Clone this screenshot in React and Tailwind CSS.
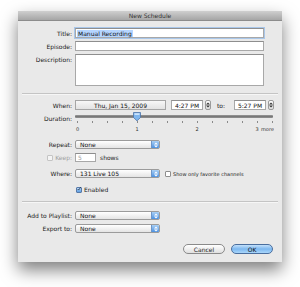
import React from "react";

const Label = ({ children, className = "" }) => (
  <div className={`w-[57px] shrink-0 pr-[3px] text-right text-[6px] leading-[7px] text-[#1a1a1a] ${className}`}>
    {children}
  </div>
);

const Field = ({ className = "", children }) => (
  <div className={`flex items-center border border-[#a8a8a8] border-t-[#8e8e8e] bg-white text-[6px] leading-[7px] text-[#111] ${className}`}>
    {children}
  </div>
);

const UpDown = ({ color = "#fff" }) => (
  <svg width="4" height="6" viewBox="0 0 4 6">
    <path d="M0 2.4 L2 0.4 L4 2.4 Z" fill={color} />
    <path d="M0 3.6 L2 5.6 L4 3.6 Z" fill={color} />
  </svg>
);

const Popup = ({ value }) => (
  <div className="flex h-[9px] w-[85px] overflow-hidden rounded-[2px] border border-[#9b9b9b] bg-linear-to-b from-white to-[#e4e4e4]">
    <div className="flex-1 pl-[4px] text-[6px] leading-[7px] text-[#111]">{value}</div>
    <div className="flex w-[8px] items-center justify-center border-l border-[#6d95c7] bg-linear-to-b from-[#a9d0f5] to-[#4a90e0]">
      <UpDown />
    </div>
  </div>
);

const Stepper = () => (
  <div className="flex h-[10px] w-[6px] items-center justify-center rounded-[2px] border border-[#9b9b9b] bg-linear-to-b from-white to-[#dcdcdc]">
    <UpDown color="#333" />
  </div>
);

const Check = ({ checked, dim }) => (
  <div
    className={`flex h-[6px] w-[6px] shrink-0 items-center justify-center rounded-[1px] border ${
      dim ? "border-[#c4c4c4] bg-[#f4f4f4]" : "border-[#8e8e8e] bg-white"
    } ${checked ? "bg-linear-to-b from-[#b8d9f7] to-[#5d9fe3] border-[#5879a8]" : ""}`}
  >
    {checked && (
      <svg width="6" height="6" viewBox="0 0 6 6" className="-mt-[1px]">
        <path d="M1 3 L2.5 4.6 L5.6 0.3" stroke="#1b2a44" strokeWidth="1.1" fill="none" />
      </svg>
    )}
  </div>
);

const Slider = () => {
  const ticks = Array.from({ length: 14 }, (_, i) => 2 + i * 15);
  return (
    <svg width="199" height="20" viewBox="0 0 199 20" className="block">
      <rect x="0" y="3.5" width="198" height="2.5" rx="1" fill="#8a8a8a" />
      <rect x="0" y="3.5" width="198" height="1" rx="0.5" fill="#666" />
      {ticks.map((x) => (
        <line key={x} x1={x + 0.5} y1="9" x2={x + 0.5} y2="11" stroke="#8a8a8a" strokeWidth="1" />
      ))}
      <path d="M58.5 0.5 H65.5 V5.5 L62 8.8 L58.5 5.5 Z" fill="#7fb6ee" stroke="#4b73a8" strokeWidth="0.8" />
      <path d="M59.5 1.2 H64.5 V3 H59.5 Z" fill="#c9e2fb" />
      <g fontSize="5" fill="#333" fontFamily="'DejaVu Sans', sans-serif">
        <text x="1" y="19">0</text>
        <text x="60.6" y="19">1</text>
        <text x="120.6" y="19">2</text>
        <text x="180.6" y="19">3</text>
        <text x="186" y="19">more</text>
      </g>
    </svg>
  );
};

const Separator = ({ className = "" }) => (
  <div className={`mx-[4px] h-[2px] border-t border-[#c4c4c4] border-b border-b-[#f6f6f6] ${className}`} />
);

const App = () => {
  return (
    <div className="h-[287px] w-[300px] overflow-hidden bg-white pl-[18px] pt-[11px] font-['DejaVu_Sans',sans-serif] text-[#1a1a1a]">
      <div className="flex h-[251px] w-[264px] flex-col bg-[#e9e9e9] shadow-[0_8px_16px_rgba(0,0,0,0.5)]">
        <div className="flex h-[10px] items-center justify-center border-b border-[#8c8c8c] bg-linear-to-b from-[#cfcfcf] to-[#a6a6a6] text-[6px] leading-[7px] text-[#333]">
          New Schedule
        </div>

        <div className="mt-[7px] flex items-center">
          <Label>Title:</Label>
          <Field className="h-[10px] w-[189px] border-[#7fa6d6] pl-[1px] shadow-[0_0_0_1px_#a9c7ea]">
            <span className="bg-[#b5d5ff] px-[1px]">Manual Recording</span>
          </Field>
        </div>

        <div className="mt-[3px] flex items-center">
          <Label>Episode:</Label>
          <Field className="h-[10px] w-[189px]" />
        </div>

        <div className="mt-[3px] flex items-start">
          <Label className="pt-[2px]">Description:</Label>
          <Field className="h-[32px] w-[189px]" />
        </div>

        <Separator className="mt-[7px]" />

        <div className="mt-[5px] flex items-center">
          <Label>When:</Label>
          <div className="flex h-[10px] w-[91px] items-center justify-center border border-[#a5a5a5] bg-linear-to-b from-[#f7f7f7] to-[#e2e2e2] text-[6px] leading-[7px] text-[#111]">
            Thu, Jan 15, 2009
          </div>
          <Field className="ml-[5px] h-[10px] w-[32px] justify-center">4:27 PM</Field>
          <div className="ml-[2px]">
            <Stepper />
          </div>
          <div className="ml-[6px] w-[17px] text-[6px] leading-[7px]">to:</div>
          <Field className="h-[10px] w-[32px] justify-center">5:27 PM</Field>
          <div className="ml-[2px]">
            <Stepper />
          </div>
        </div>

        <div className="mt-[2px] flex items-start">
          <Label className="pt-[3px]">Duration:</Label>
          <Slider />
        </div>

        <div className="mt-[8px] flex items-center">
          <Label>Repeat:</Label>
          <Popup value="None" />
        </div>

        <div className="mt-[4px] flex items-center">
          <div className="flex w-[57px] shrink-0 items-center justify-end gap-[2px] pr-[3px] text-[6px] leading-[7px] text-[#a0a0a0]">
            <Check dim />
            <span>Keep:</span>
          </div>
          <Field className="h-[9px] w-[21px] pl-[2px] text-[#a0a0a0]">5</Field>
          <span className="ml-[4px] text-[6px] leading-[7px]">shows</span>
        </div>

        <div className="mt-[7px] flex items-center">
          <Label>Where:</Label>
          <Popup value="131 Live 105" />
          <div className="ml-[5px]">
            <Check />
          </div>
          <span className="ml-[2px] text-[5px] leading-[6px]">Show only favorite channels</span>
        </div>

        <div className="mt-[8px] flex items-center pl-[58px]">
          <Check checked />
          <span className="ml-[2px] text-[6px] leading-[7px]">Enabled</span>
        </div>

        <Separator className="mt-[8px]" />

        <div className="mt-[8px] flex items-center">
          <Label>Add to Playlist:</Label>
          <Popup value="None" />
        </div>

        <div className="mt-[4px] flex items-center">
          <Label>Export to:</Label>
          <Popup value="None" />
        </div>

        <div className="mt-[11px] flex justify-end gap-[6px] pr-[9px]">
          <button className="flex h-[10px] w-[42px] items-center justify-center rounded-full border border-[#8a8a8a] bg-linear-to-b from-white to-[#e0e0e0] text-[6px] leading-[7px] text-[#222]">
            Cancel
          </button>
          <button className="flex h-[10px] w-[42px] items-center justify-center rounded-full border border-[#4a6e9e] bg-linear-to-b from-[#c3e0fa] via-[#7db8f0] to-[#a9d6fb] text-[6px] leading-[7px] text-[#111]">
            OK
          </button>
        </div>
      </div>
    </div>
  );
};

export default App;
